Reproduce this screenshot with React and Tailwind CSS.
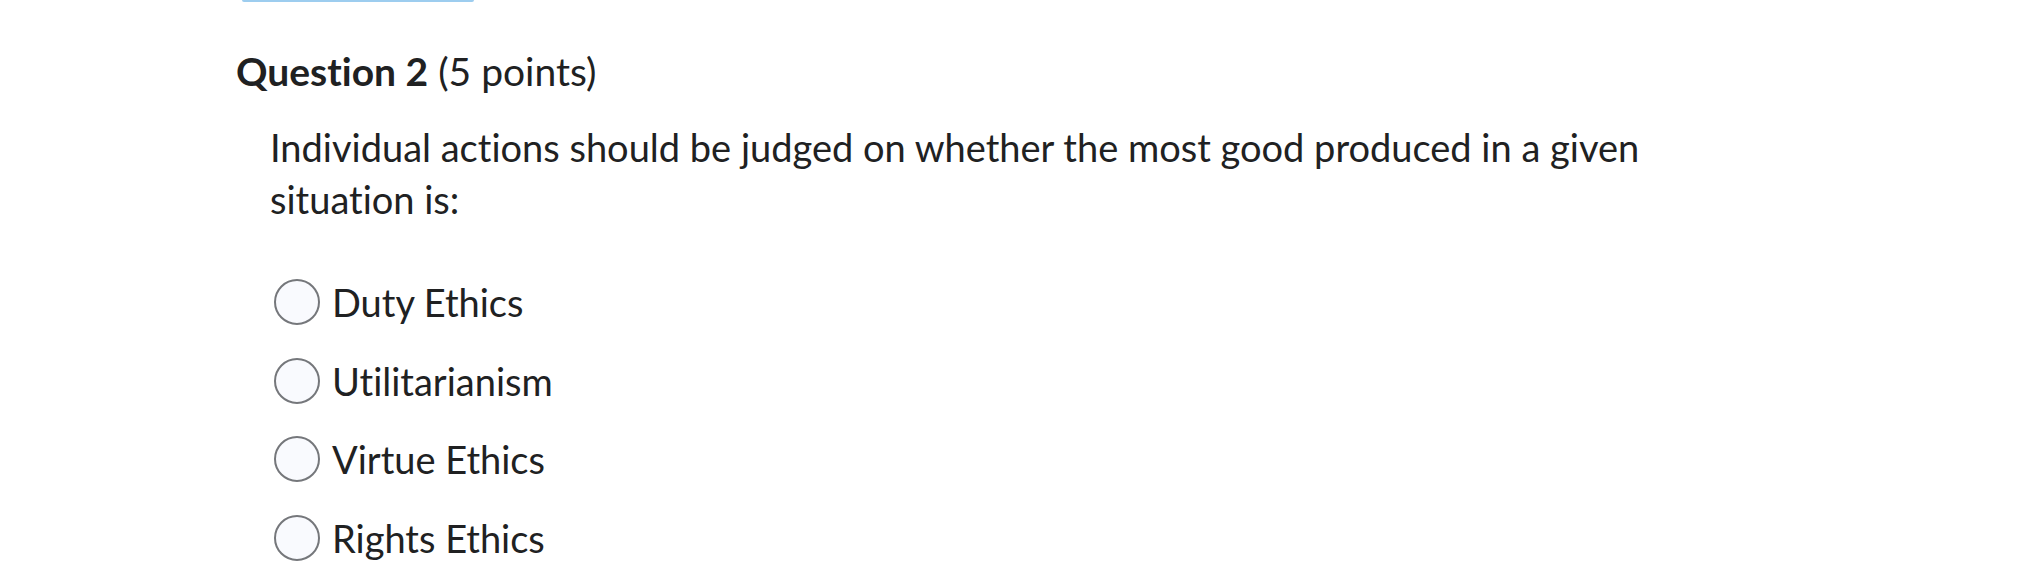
const options = ["Duty Ethics", "Utilitarianism", "Virtue Ethics", "Rights Ethics"];

function Radio() {
  return (
    <span className="block w-[46px] h-[46px] shrink-0 rounded-full border-[2px] border-[#75777b] bg-[#f9fafe]" />
  );
}

export default function App() {
  return (
    <div className="w-[2037px] h-[581px] overflow-hidden bg-white text-[#202122] font-['Lato','Liberation_Sans',sans-serif] [font-variant-ligatures:none]">
      {/* bottom edge of the control above */}
      <div className="ml-[242px] w-[232px] h-[2px] rounded-b-[2px] bg-[#9dcdef]" />

      <div className="pl-[236px] pt-[46px]">
        <h2 className="text-[39px] leading-[46px]">
          <span className="font-bold">Question 2</span> <span className="font-normal">(5 points)</span>
        </h2>

        <div className="pl-[34px] pt-[27px]">
          <p className="max-w-[1420px] text-[38px] leading-[52px]">
            Individual actions should be judged on whether the most good produced in a given situation is:
          </p>

          <div className="mt-[54px] flex flex-col gap-[32.5px]">
            {options.map((o) => (
              <label key={o} className="flex items-center gap-[12px] h-[46px] pl-[4px]">
                <Radio />
                <span className="text-[38px] leading-[46px]">{o}</span>
              </label>
            ))}
          </div>
        </div>
      </div>
    </div>
  );
}
